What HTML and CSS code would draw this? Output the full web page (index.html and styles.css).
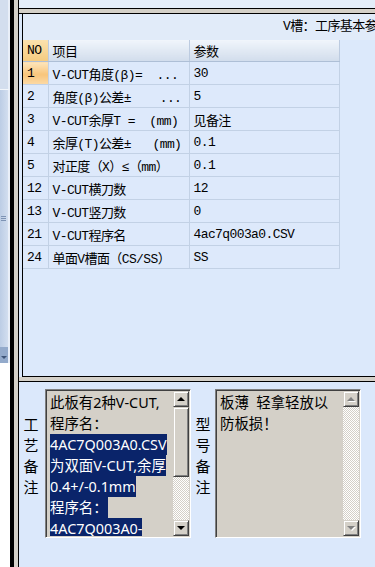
FILE: index.html
```html
<!DOCTYPE html>
<html lang="zh-CN">
<head>
    <meta charset="UTF-8">
    <meta name="viewport" content="width=device-width, initial-scale=1.0">
    <title>V槽工序参数</title>
    <link rel="stylesheet" href="styles.css">
</head>
<body>
<div class="app">
    <!-- left scroller of the outer window -->
    <div class="vscroll">
        <div class="vs-track"></div>
        <div class="vs-thumb"><span class="grip"></span></div>
        <div class="vs-down"><span class="arrow"></span></div>
        <div class="vs-blank"></div>
    </div>

    <div class="frame">
        <div class="main">
            <div class="top-strip"></div>
            <div class="splitter"></div>

            <!-- parameter grid -->
            <div class="upper">
                <div class="grid-panel">
                    <div class="caption">V槽：工序基本参数</div>
                    <table class="grid">
                        <colgroup>
                            <col class="c-no">
                            <col class="c-item">
                            <col class="c-val">
                        </colgroup>
                        <tr>
                            <th class="no">NO</th>
                            <th>项目</th>
                            <th>参数</th>
                        </tr>
                        <tr>
                            <td class="no current">1</td>
                            <td>V-CUT角度(β)=  ...</td>
                            <td>30</td>
                        </tr>
                        <tr>
                            <td class="no">2</td>
                            <td>角度(β)公差±    ...</td>
                            <td>5</td>
                        </tr>
                        <tr>
                            <td class="no">3</td>
                            <td>V-CUT余厚T =  (mm)</td>
                            <td>见备注</td>
                        </tr>
                        <tr>
                            <td class="no">4</td>
                            <td>余厚(T)公差±   (mm)</td>
                            <td>0.1</td>
                        </tr>
                        <tr>
                            <td class="no">5</td>
                            <td>对正度（X）≤（mm）</td>
                            <td>0.1</td>
                        </tr>
                        <tr>
                            <td class="no">12</td>
                            <td>V-CUT横刀数</td>
                            <td>12</td>
                        </tr>
                        <tr>
                            <td class="no">13</td>
                            <td>V-CUT竖刀数</td>
                            <td>0</td>
                        </tr>
                        <tr>
                            <td class="no">21</td>
                            <td>V-CUT程序名</td>
                            <td>4ac7q003a0.CSV</td>
                        </tr>
                        <tr>
                            <td class="no">24</td>
                            <td>单面V槽面（CS/SS）</td>
                            <td>SS</td>
                        </tr>
                    </table>
                </div>
            </div>

            <div class="splitter splitter-low"></div>

            <!-- remarks -->
            <div class="lower">
                <div class="vlabel">工<br>艺<br>备<br>注</div>
                <div class="memo">
                    <div class="memo-text">
                        <div class="line">此板有2种V-CUT,</div>
                        <div class="line">程序名：</div>
                        <div class="line"><span class="sel">4AC7Q003A0.CSV</span></div>
                        <div class="line"><span class="sel">为双面V-CUT,余厚</span></div>
                        <div class="line"><span class="sel">0.4+/-0.1mm</span></div>
                        <div class="line"><span class="sel">程序名：</span></div>
                        <div class="line"><span class="sel">4AC7Q003A0-</span></div>
                    </div>
                    <div class="sbar">
                        <div class="sb-btn"><span class="arrow up"></span></div>
                        <div class="sb-thumb"></div>
                        <div class="sb-track"></div>
                        <div class="sb-btn"><span class="arrow down"></span></div>
                    </div>
                </div>

                <div class="vlabel vlabel-2">型<br>号<br>备<br>注</div>
                <div class="memo">
                    <div class="memo-text">
                        <div class="line">板薄  轻拿轻放以</div>
                        <div class="line">防板损！</div>
                    </div>
                    <div class="sbar">
                        <div class="sb-btn"><span class="arrow up off"></span></div>
                        <div class="sb-track"></div>
                        <div class="sb-btn"><span class="arrow down off"></span></div>
                    </div>
                </div>
            </div>
        </div>
    </div>
</div>
</body>
</html>
```

FILE: styles.css
```css
body {
    margin: 0;
    font-family: "Noto Sans", "Noto Sans CJK SC", sans-serif;
}
.app {
    display: flex;
    width: 375px;
    height: 567px;
    overflow: hidden;
    background: #fff;
}

/* outer scroller */
.vscroll {
    width: 10px;
    display: flex;
    flex-direction: column;
}
.vs-track {
    height: 89px;
    background: #d3deee;
    border-right: 2px solid #e9eff8;
}
.vs-thumb {
    height: 258px;
    box-sizing: border-box;
    background: linear-gradient(90deg, #bccde5, #d2deef);
    border-top: 1px solid #f2f6fb;
    border-right: 2px solid #e9eff8;
    display: flex;
    align-items: center;
    justify-content: center;
}
.grip {
    width: 5px;
    height: 5px;
    background: repeating-linear-gradient(#7d93b4 0 1px, transparent 1px 2px);
    margin-right: 2px;
}
.vs-down {
    height: 16px;
    background: #93aacb;
    display: flex;
    align-items: center;
    justify-content: center;
    border-right: 2px solid #e9eff8;
}
.vs-down .arrow {
    border-left: 3px solid transparent;
    border-right: 3px solid transparent;
    border-top: 3px solid #3e5478;
    margin-top: 4px;
}
.vs-blank {
    flex: 1;
    background: #fff;
}

.frame {
    flex: 1;
    display: flex;
    min-width: 0;
    border-left: 4px solid #000;
    background: #d4d0c8;
    padding-left: 4px;
}
.main {
    flex: 1;
    min-width: 0;
    display: flex;
    flex-direction: column;
    border-left: 1px solid #000;
    background: #dbe8fb;
    overflow: hidden;
}
.top-strip {
    height: 8px;
    background: #e4edf9;
}
.splitter {
    height: 4px;
    background: #d4d0c8;
    border-top: 1px solid #000;
    border-bottom: 1px solid #000;
}
.splitter-low {
    border-top: 0;
}

/* parameter grid */
.upper {
    height: 363px;
    padding-left: 3px;
    display: flex;
    background: #dbe8fb;
}
.grid-panel {
    flex: 1;
    min-width: 0;
    border-left: 1px solid #000;
    border-bottom: 1px solid #000;
    background: #dce9fb;
    overflow: hidden;
}
.caption {
    height: 26px;
    line-height: 26px;
    padding-left: 260px;
    white-space: nowrap;
    font-family: "Liberation Mono", "Noto Sans CJK SC", monospace;
    font-size: 13px;
    letter-spacing: -0.6px;
    color: #000;
    background: #e1ebf9;
}
.grid {
    border-collapse: collapse;
    table-layout: fixed;
    width: 316px;
    font-family: "Liberation Mono", "Noto Sans CJK SC", monospace;
    font-size: 13px;
    letter-spacing: -0.6px;
    color: #000;
}
.c-no { width: 25px; }
.c-item { width: 141px; }
.c-val { width: 150px; }
.grid th,
.grid td {
    padding: 0 0 0 4px;
    text-align: left;
    font-weight: normal;
    white-space: pre;
    overflow: hidden;
    border-right: 1px solid #c2d1e5;
    border-bottom: 1px solid #c2d1e5;
}
.grid th {
    height: 21px;
    background: linear-gradient(#f0f5fb, #d2ddec);
    border-bottom-color: #aebfd6;
    border-right-color: #bccbe0;
}
.grid td {
    height: 22px;
    background: #dde9fb;
}
.grid .no {
    padding-left: 4px;
}
.grid th.no {
    background: linear-gradient(#fbe2ae, #f5cc80);
}
.grid td.current {
    background: linear-gradient(#fde5bb, #f8c57b 55%, #fcdaa6);
}

/* remarks */
.lower {
    flex: 1;
    display: flex;
    align-items: flex-start;
    padding: 7px 0 0 4px;
}
.vlabel {
    width: 16px;
    margin-right: 6px;
    padding-top: 24px;
    font-family: "Noto Sans CJK SC", sans-serif;
    font-size: 15px;
    line-height: 21px;
    text-align: center;
    color: #000;
}
.vlabel-2 {
    width: 24px;
    margin-right: 0;
}
.memo {
    width: 146px;
    height: 149px;
    box-sizing: border-box;
    display: flex;
    padding: 1px;
    background: #d4d0c8;
    border: 1px solid;
    border-color: #808080 #fff #fff #808080;
    box-shadow: inset 1px 1px 0 #404040;
}
.memo-text {
    flex: 1;
    min-width: 0;
    overflow: hidden;
    padding: 1px 0 0 3px;
    font-family: "Noto Sans", "Noto Sans CJK SC", sans-serif;
    font-size: 14.4px;
    line-height: 21px;
    color: #000;
    white-space: nowrap;
}
.line {
    height: 21px;
    white-space: pre;
}
.sel {
    display: inline-block;
    background: #0a246a;
    color: #fff;
}
.sbar {
    width: 16px;
    display: flex;
    flex-direction: column;
}
.sb-btn,
.sb-thumb {
    box-sizing: border-box;
    background: #d4d0c8;
    border: 1px solid;
    border-color: #d4d0c8 #404040 #404040 #d4d0c8;
    box-shadow: inset 1px 1px 0 #fff, inset -1px -1px 0 #808080;
}
.sb-btn {
    height: 16px;
    display: flex;
    align-items: center;
    justify-content: center;
}
.sb-thumb {
    height: 70px;
}
.sb-track {
    flex: 1;
    background: repeating-conic-gradient(#fff 0 25%, #d4d0c8 0 50%) 0 0 / 2px 2px;
}
.arrow {
    width: 0;
    height: 0;
    border-left: 4px solid transparent;
    border-right: 4px solid transparent;
}
.arrow.up {
    border-bottom: 4px solid #000;
}
.arrow.down {
    border-top: 4px solid #000;
}
.arrow.up.off {
    border-bottom-color: #808080;
    filter: drop-shadow(1px 1px 0 #fff);
}
.arrow.down.off {
    border-top-color: #808080;
    filter: drop-shadow(1px 1px 0 #fff);
}
```
